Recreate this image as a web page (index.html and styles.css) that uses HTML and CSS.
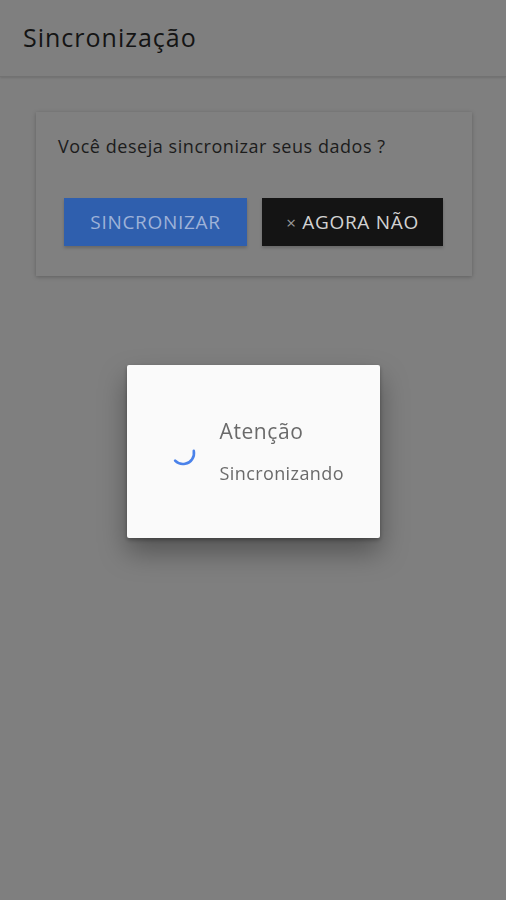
FILE: index.html
```html
<!DOCTYPE html>
<html lang="pt">
<head>
    <meta charset="UTF-8">
    <meta name="viewport" content="width=device-width, initial-scale=1.0">
    <title>Sincronização</title>
    <link rel="stylesheet" href="styles.css">
</head>
<body>
    <div class="topbar">
        <span class="topbar-title">Sincronização</span>
    </div>
    <div class="content">
        <div class="sync-card">
            <p class="sync-question">Você deseja sincronizar seus dados ?</p>
            <div class="sync-actions">
                <button class="btn btn-sync">SINCRONIZAR</button>
                <button class="btn btn-later"><span class="btn-x">×</span> AGORA NÃO</button>
            </div>
        </div>
    </div>
    <div class="overlay">
        <div class="dialog">
            <svg class="spinner" width="30" height="30" viewBox="0 0 30 30">
                <circle cx="15" cy="15" r="11" fill="none" stroke="#4a82ea" stroke-width="2.6"
                        stroke-linecap="round" stroke-dasharray="28 100" transform="rotate(-11 15 15)"/>
            </svg>
            <div class="dialog-text">
                <div class="dialog-title">Atenção</div>
                <div class="dialog-msg">Sincronizando</div>
            </div>
        </div>
    </div>
</body>
</html>
```
FILE: styles.css
```css
body {
    font-family: "Open Sans", "Noto Sans", sans-serif;
    margin: 0;
    padding: 0;
    background-color: #7f7f7f;
    height: 900px;
    overflow: hidden;
}
.topbar {
    height: 76px;
    display: flex;
    align-items: center;
    padding: 0 23px;
    border-bottom: 1px solid #727272;
    box-shadow: 0 1px 2px rgba(0, 0, 0, 0.12);
}
.topbar-title {
    font-size: 25px;
    letter-spacing: 1px;
    color: #141414;
    margin-top: -2px;
}
.content {
    padding: 35px 34px 0 36px;
}
.sync-card {
    background-color: #808080;
    box-shadow: 0 1px 4px rgba(0, 0, 0, 0.25);
    padding: 22px 28px 30px 22px;
}
.sync-question {
    margin: 0 0 40px 0;
    font-size: 18px;
    letter-spacing: 0.55px;
    color: #1c1c1c;
}
.sync-actions {
    display: flex;
    gap: 15px;
    padding-left: 6px;
}
.btn {
    font-family: inherit;
    border: none;
    height: 48px;
    font-size: 19px;
    letter-spacing: 0.7px;
    padding: 0;
    box-shadow: 0 2px 3px rgba(0, 0, 0, 0.2);
}
.btn-sync {
    width: 183px;
    background-color: #2f5fae;
    color: #9eb2d8;
}
.btn-later {
    width: 181px;
    background-color: #141414;
    color: #d2d2d2;
}
.btn-x {
    color: #9a9a9a;
    font-size: 17px;
}
.overlay {
    position: fixed;
    inset: 0;
    display: flex;
    align-items: center;
    justify-content: center;
}
.dialog {
    width: 253px;
    height: 173px;
    background-color: #fafafa;
    border-radius: 2px;
    box-shadow: 0 14px 28px rgba(0, 0, 0, 0.35), 0 2px 4px rgba(0, 0, 0, 0.3);
    display: flex;
    align-items: center;
    margin-top: 3px;
}
.spinner {
    margin-left: 41px;
    margin-top: 2px;
}
.dialog-text {
    margin-left: 22px;
    margin-top: -2px;
}
.dialog-title {
    font-size: 21px;
    letter-spacing: 0.6px;
    color: #6a6a6a;
    margin-bottom: 16px;
}
.dialog-msg {
    font-size: 18px;
    letter-spacing: 0.4px;
    color: #6a6a6a;
}
```
